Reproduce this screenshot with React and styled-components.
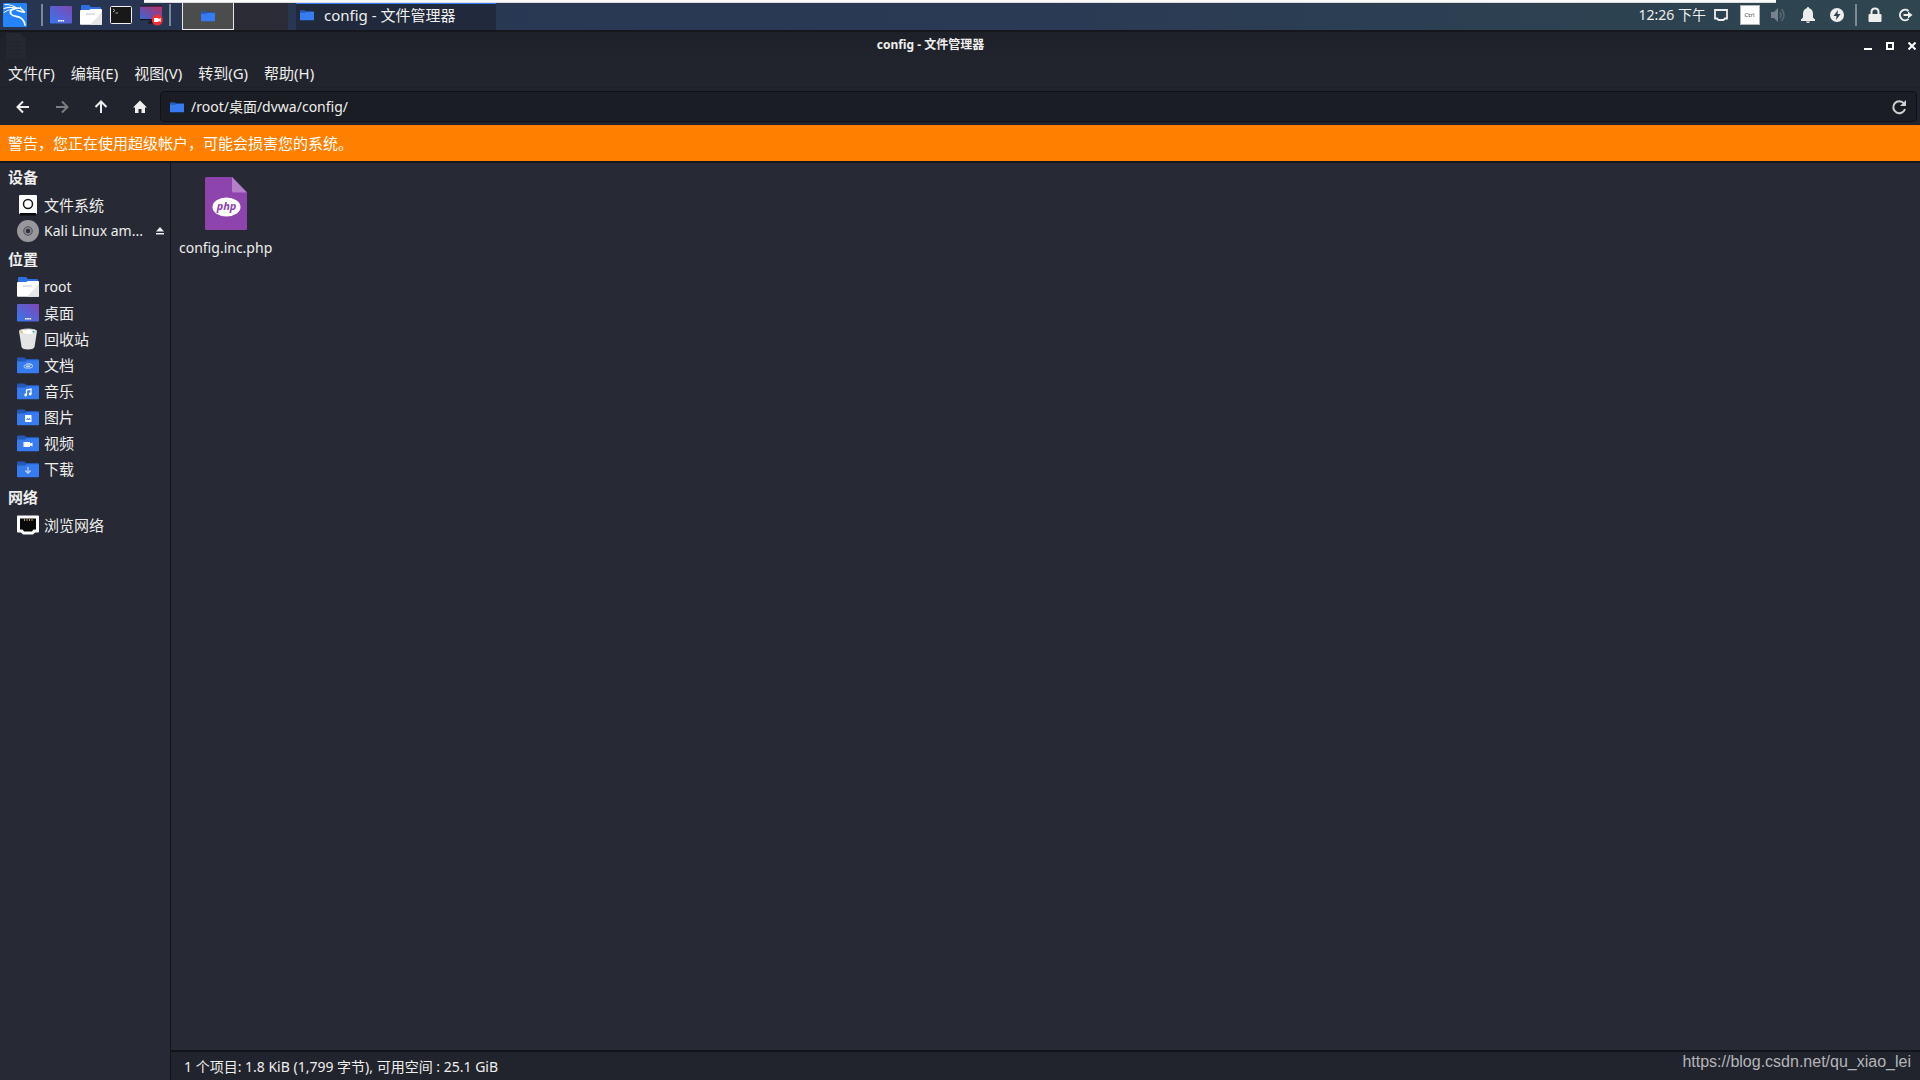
import React from 'react';
import styled, { createGlobalStyle, css } from 'styled-components';

const GlobalStyle = createGlobalStyle`
  * {
    box-sizing: border-box;
  }

  body {
    margin: 0;
    background: #272935;
  }

  button, input {
    font: inherit;
    color: inherit;
  }
`;

// Icons

const Folder = ({ size = 22, children }) => (
  <svg width={size} height={size} viewBox="0 0 22 22" aria-hidden="true">
    <path d="M0 4.500q0-1 1-1h6.500l1.500 1.500h12q1 0 1 1v3H0z" fill="#2459b8" />
    <path d="M0 7.500h8l1.500-1.200H22v12.200q0 .8-.8.800H.8q-.8 0-.8-.8z" fill="#367bf0" />
    {children}
  </svg>
);

const HomeFolder = () => (
  <svg width="22" height="22" viewBox="0 0 22 22" aria-hidden="true">
    <path d="M1 2q0-1 1-1h7l2 2h9q1 0 1 1v4H1z" fill="#2f6fe0" />
    <path d="M0 7q0-1 1-1h8l2-1h10q1 0 1 1v14q0 .8-.8.800H.8Q0 20.800 0 20z" fill="#fff" />
    <path d="M22 8v12q0 .8-.8.800H10z" fill="#e6e6e8" />
    <rect x="6" y="9.500" width="9" height="1" fill="#c4c4c8" />
  </svg>
);

const Desktop = () => (
  <svg width="22" height="22" viewBox="0 0 22 22" aria-hidden="true">
    <defs>
      <linearGradient id="screen" x1="0" y1="1" x2="1" y2="0">
        <stop offset="0" stopColor="#3478f0" />
        <stop offset="1" stopColor="#8147b4" />
      </linearGradient>
    </defs>
    <rect y="2" width="22" height="17.500" rx="1" fill="url(#screen)" />
    <path d="M8 16h1.700v1.500H8zM10.200 16h1.700v1.500h-1.700zM12.400 16h1.700v1.500h-1.700z" fill="#fff" />
  </svg>
);

const Terminal = () => (
  <svg width="22" height="22" viewBox="0 0 22 22" aria-hidden="true">
    <rect x=".5" y="2.500" width="21" height="17" rx="1" fill="#181818" stroke="#f2f2f2" />
    <path d="M3 5l2 1.500L3 8M5.500 9h2.500" fill="none" stroke="#aaa" strokeWidth="1" />
  </svg>
);

const Recorder = () => (
  <svg width="23" height="22" viewBox="0 0 23 22" aria-hidden="true">
    <defs>
      <linearGradient id="record" x1="0" y1="1" x2="1" y2="0">
        <stop offset="0" stopColor="#3468d8" />
        <stop offset="1" stopColor="#c02c62" />
      </linearGradient>
    </defs>
    <rect y="2" width="22" height="13.500" fill="url(#record)" />
    <path d="M0 1.500h22v1H0zM0 15h22v1.300H0zM10 16h3v3h-3zM8 18h6v1.500H8z" fill="#14141c" />
    <circle cx="17.300" cy="16" r="5.600" fill="#ee2f36" />
    <path d="M14 14h4.500v1.200l2.200-1.200v4l-2.200-1.200v1.200H14z" fill="#fff" />
  </svg>
);

const KaliLogo = () => (
  <svg width="24" height="24" viewBox="0 0 24 24" aria-hidden="true">
    <rect width="24" height="24" rx="1" fill="#2583fc" />
    <g fill="none" stroke="#fff" strokeLinecap="round" strokeLinejoin="round">
      <path d="M2 1.500c4.500 0 8.500 1 11.500 3.500" strokeWidth="1.200" />
      <path d="M1 5.500c4-1.500 8-1.500 12 0" strokeWidth="1.100" />
      <path d="M1 9.500c3-2.300 6-3 10-3" strokeWidth="1" />
      <path d="M12.500 5.500c-4.500.5-6.500 3.500-4 6 2 2 5.500 1.500 8.500 3 3 1.500 4.500 4 5 7.500" strokeWidth="1.700" />
      <path d="M12.500 5.500c2.500-1 5-.5 6.500 1l2.500 2.800-3-.6c-1.500-.4-3-1.200-4.500-1.200" strokeWidth="1.500" />
      <path d="M18 5.500l-.5-1.500" strokeWidth="1" />
    </g>
  </svg>
);

const Drive = () => (
  <svg width="22" height="22" viewBox="0 0 22 22" aria-hidden="true">
    <rect x="2" y="1" width="18" height="19" rx="1" fill="#fff" />
    <circle cx="11" cy="10" r="4.500" fill="none" stroke="#181818" strokeWidth="1.500" />
    <rect x="3" y="19" width="16" height="2.500" fill="#0c0c10" />
  </svg>
);

const Disc = () => (
  <svg width="22" height="22" viewBox="0 0 22 22" aria-hidden="true">
    <circle cx="11" cy="11" r="11" fill="#98989c" />
    <circle cx="11" cy="11" r="4.300" fill="#86868c" stroke="#50505a" strokeWidth="1" />
    <circle cx="11" cy="11" r="2.200" fill="#30303a" />
  </svg>
);

const Trash = () => (
  <svg width="22" height="22" viewBox="0 0 22 22" aria-hidden="true">
    <path d="M2 3l2.500 16q1 2.500 6.500 2.500t6.500-2.500L20 3z" fill="#e4e4e4" />
    <ellipse cx="11" cy="3" rx="9" ry="2.500" fill="#d0d0d0" />
    <path d="M4 4l2-2 3 .5L12 1l3 1.500 3-.3v2Q11 8 4 4z" fill="#fff" />
    <path d="M4 3.500h2V5H4z" fill="#e8c53c" />
    <path d="M15.500 3h2v1.500h-2z" fill="#45a6b8" />
  </svg>
);

const Ethernet = () => (
  <svg width="22" height="22" viewBox="0 0 22 22" aria-hidden="true">
    <path d="M1 1.500h20q1 0 1 1v15q0 1-1 1h-3L16 20.500H6L4 18.500H1q-1 0-1-1v-15q0-1 1-1z" fill="#fff" />
    <path d="M3 4.500h16v11h-2.500l-1.500 2H7l-1.500-2H3z" fill="#080808" />
    <path d="M7.500 5v2M10 5v2M12.500 5v2M15 5v2" stroke="#b89a58" strokeWidth="1" />
  </svg>
);

const PhpFile = () => (
  <svg width="42" height="54" viewBox="0 0 42 54" aria-hidden="true">
    <path d="M1.500 0H27l15 15.500v36q0 1.500-1.500 1.500h-39Q0 53 0 51.500v-50Q0 0 1.500 0z" fill="#8e44ad" />
    <path d="M27 0l15 15.500H28.500q-1.500 0-1.500-1.500z" fill="#b37fca" />
    <ellipse cx="21.500" cy="30" rx="14" ry="9.500" fill="#fff" />
    <text x="21.500" y="33" textAnchor="middle" fontFamily="Open Sans, sans-serif" fontSize="11" fontWeight="bold" fontStyle="italic" fill="#8e44ad">php</text>
  </svg>
);

const Eject = () => (
  <svg width="8" height="8" viewBox="0 0 8 8" aria-hidden="true">
    <path d="M4 0l4 4.500H0zM0 6h8v1.500H0z" fill="#eee" />
  </svg>
);

const Arrow = ({ turn = 0 }) => (
  <svg width="14" height="14" viewBox="0 0 14 14" aria-hidden="true">
    <path d="M13 7H2M7 1.500L1.500 7 7 12.500" transform={`rotate(${turn} 7 7)`} fill="none" stroke="currentColor" strokeWidth="2" />
  </svg>
);

const Home = () => (
  <svg width="14" height="14" viewBox="0 0 14 14" aria-hidden="true">
    <path d="M7 .5l7 7h-2V13H8.500V9h-3v4H2V7.500H0z" fill="currentColor" />
  </svg>
);

const Reload = () => (
  <svg width="16" height="16" viewBox="0 0 16 16" aria-hidden="true">
    <path d="M13 4.500A6 6 0 1 0 14 10" fill="none" stroke="currentColor" strokeWidth="2" />
    <path d="M15 1v6H9z" fill="currentColor" />
  </svg>
);

const Screen = () => (
  <svg width="14" height="14" viewBox="0 0 14 14" aria-hidden="true">
    <path d="M1 2h12v8.500h-2L9.500 12h-5L3 10.500H1z" fill="none" stroke="#eee" strokeWidth="1.800" />
  </svg>
);

const Speaker = () => (
  <svg width="16" height="16" viewBox="0 0 16 16" aria-hidden="true">
    <path d="M0 5h3l4-4v14l-4-4H0z" fill="#75828b" />
    <path d="M9 5q2 3 0 6M10.500 2q5 6 0 12" fill="none" stroke="#5a6a74" strokeWidth="1.500" />
  </svg>
);

const Bell = () => (
  <svg width="14" height="16" viewBox="0 0 14 16" aria-hidden="true">
    <path d="M7 0q1 0 1.200 1.200Q12 2.200 12 7v3.500l2 2V14H0v-1.500l2-2V7q0-4.800 3.800-5.800Q6 0 7 0zM5 14.500h4Q8.500 16 7 16t-2-1.500z" fill="#eee" />
  </svg>
);

const Power = () => (
  <svg width="14" height="14" viewBox="0 0 14 14" aria-hidden="true">
    <circle cx="7" cy="7" r="7" fill="#eee" />
    <path d="M8 2L3.500 8h3L6 12l4.500-6h-3z" fill="#2e404c" />
  </svg>
);

const Lock = () => (
  <svg width="14" height="16" viewBox="0 0 14 16" aria-hidden="true">
    <rect x=".5" y="7" width="13" height="8" rx="1" fill="#eee" />
    <path d="M3.500 7.500V5q0-3.500 3.500-3.500T10.500 5v2.500" fill="none" stroke="#eee" strokeWidth="2" />
  </svg>
);

const Logout = () => (
  <svg width="15" height="14" viewBox="0 0 15 14" aria-hidden="true">
    <path d="M10.500 3A5.200 5.200 0 1 0 10.500 11" fill="none" stroke="#eee" strokeWidth="2" />
    <path d="M5.500 6H10V3.500L14.500 7 10 10.500V8H5.500z" fill="#eee" />
  </svg>
);

const Minimize = () => (
  <svg width="8" height="8" viewBox="0 0 8 8" aria-hidden="true">
    <rect y="6" width="8" height="2" fill="#fff" />
  </svg>
);

const Maximize = () => (
  <svg width="8" height="8" viewBox="0 0 8 8" aria-hidden="true">
    <rect x="1" y="1" width="6" height="6" fill="none" stroke="#fff" strokeWidth="2" />
  </svg>
);

const Close = () => (
  <svg width="8" height="8" viewBox="0 0 8 8" aria-hidden="true">
    <path d="M.5.5l7 7M7.500.5l-7 7" stroke="#fff" strokeWidth="2" />
  </svg>
);

const GhostFile = () => (
  <svg width="22" height="27" viewBox="0 0 22 27" aria-hidden="true">
    <path d="M1 1h14l6 6v20H1z" fill="#262830" />
    <path d="M4 10h13M4 14h13M4 18h13M4 22h13" stroke="#23252c" />
  </svg>
);

const devices = [
  { name: '文件系统', icon: <Drive /> },
  { name: 'Kali Linux am...', icon: <Disc />, latin: true, eject: true },
];

const places = [
  { name: 'root', icon: <HomeFolder />, latin: true },
  { name: '桌面', icon: <Desktop /> },
  { name: '回收站', icon: <Trash /> },
  {
    name: '文档',
    icon: (
      <Folder>
        <path d="M14 11H9q-2 0-2 1.500T9 14h4q2.500 0 2.500-2T13 9.800H9.500M9 12.500h4" fill="none" stroke="#c4d8fb" strokeWidth="1" />
      </Folder>
    ),
  },
  {
    name: '音乐',
    icon: (
      <Folder>
        <path d="M9.500 15V10l4.500-1v5" fill="none" stroke="#fff" strokeWidth="1.300" />
        <circle cx="8.700" cy="15" r="1.400" fill="#fff" />
        <circle cx="13.200" cy="14" r="1.400" fill="#fff" />
      </Folder>
    ),
  },
  {
    name: '图片',
    icon: (
      <Folder>
        <rect x="8" y="9" width="6.500" height="7" fill="#fff" />
        <path d="M9 14l1.500-2 1 1 1-1.500 1.200 2.500z" fill="#5a8fee" />
      </Folder>
    ),
  },
  {
    name: '视频',
    icon: (
      <Folder>
        <path d="M6.500 10h6.500v1.500l2.500-1v4l-2.500-1V15H6.500z" fill="#fff" />
      </Folder>
    ),
  },
  {
    name: '下载',
    icon: (
      <Folder>
        <path d="M11 9v6M8.300 12.500L11 15.200l2.700-2.700" fill="none" stroke="#c4d8fb" strokeWidth="1.200" />
      </Folder>
    ),
  },
];

const network = [{ name: '浏览网络', icon: <Ethernet /> }];

const menus = ['文件(F)', '编辑(E)', '视图(V)', '转到(G)', '帮助(H)'];

const Section = ({ title, items }) => (
  <section>
    <GroupTitle>{title}</GroupTitle>
    <PlaceList>
      {items.map((item) => (
        <PlaceRow key={item.name}>
          <PlaceButton $latin={item.latin}>
            {item.icon}
            {item.name}
          </PlaceButton>
          {item.eject && (
            <EjectButton aria-label="弹出">
              <Eject />
            </EjectButton>
          )}
        </PlaceRow>
      ))}
    </PlaceList>
  </section>
);

const App = () => (
  <Screenful>
    <GlobalStyle />
    <Panel>
      <Launchers>
        <PanelButton aria-label="Kali" $wide>
          <KaliLogo />
        </PanelButton>
        <Divider />
        <Apps>
          <PanelButton aria-label="桌面"><Desktop /></PanelButton>
          <PanelButton aria-label="文件"><HomeFolder /></PanelButton>
          <PanelButton aria-label="终端"><Terminal /></PanelButton>
          <PanelButton aria-label="录屏"><Recorder /></PanelButton>
        </Apps>
        <Divider />
      </Launchers>
      <Workspaces>
        <Workspace aria-label="工作区 1" $active>
          <Folder size={14} />
        </Workspace>
        <Workspace aria-label="工作区 2" />
      </Workspaces>
      <Task>
        <Folder size={14} />
        config - 文件管理器
      </Task>
      <Tray>
        <Clock>12:26 下午</Clock>
        <TrayIcon><Screen /></TrayIcon>
        <TrayIcon><KeyBadge>Ctrl</KeyBadge></TrayIcon>
        <TrayIcon><Speaker /></TrayIcon>
        <TrayIcon><Bell /></TrayIcon>
        <TrayIcon><Power /></TrayIcon>
        <TrayEnd>
          <Divider />
          <PanelButton aria-label="锁定"><Lock /></PanelButton>
          <PanelButton aria-label="注销"><Logout /></PanelButton>
        </TrayEnd>
      </Tray>
      <TopStrip />
    </Panel>

    <TitleBar>
      <GhostFile />
      <Title>config - 文件管理器</Title>
      <WindowButtons>
        <WindowButton aria-label="最小化"><Minimize /></WindowButton>
        <WindowButton aria-label="最大化"><Maximize /></WindowButton>
        <WindowButton aria-label="关闭"><Close /></WindowButton>
      </WindowButtons>
    </TitleBar>

    <MenuBar>
      {menus.map((menu) => (
        <MenuButton key={menu}>{menu}</MenuButton>
      ))}
    </MenuBar>

    <Toolbar>
      <ToolButton aria-label="后退"><Arrow /></ToolButton>
      <ToolButton aria-label="前进" disabled><Arrow turn={180} /></ToolButton>
      <ToolButton aria-label="向上"><Arrow turn={90} /></ToolButton>
      <ToolButton aria-label="主目录"><Home /></ToolButton>
      <PathBox>
        <Folder size={14} />
        <PathInput aria-label="位置" defaultValue="/root/桌面/dvwa/config/" />
        <ReloadButton aria-label="刷新"><Reload /></ReloadButton>
      </PathBox>
    </Toolbar>

    <Warning>警告，您正在使用超级帐户，可能会损害您的系统。</Warning>

    <Body>
      <Sidebar>
        <Section title="设备" items={devices} />
        <Section title="位置" items={places} />
        <Section title="网络" items={network} />
      </Sidebar>
      <Main>
        <Files>
          <FileItem>
            <PhpFile />
            config.inc.php
          </FileItem>
        </Files>
        <StatusBar>
          <span>1 个项目: 1.8 KiB (1,799 字节), 可用空间 : 25.1 GiB</span>
          <Watermark href="https://blog.csdn.net/qu_xiao_lei">https://blog.csdn.net/qu_xiao_lei</Watermark>
        </StatusBar>
      </Main>
    </Body>
  </Screenful>
);

// Styled components
const Screenful = styled.div`
  display: flex;
  flex-direction: column;
  min-height: 100vh;
  background: #272935;
  color: #eeeeec;
  font-family: 'Noto Sans', 'Noto Sans CJK SC', sans-serif;
  font-size: 14px;
  line-height: 20px;

  svg {
    display: block;
    flex: none;
  }
`;

const plainButton = css`
  display: flex;
  align-items: center;
  justify-content: center;
  padding: 0;
  border: none;
  background: none;
`;

const Panel = styled.header`
  position: relative;
  display: flex;
  align-items: center;
  height: 32px;
  padding-left: 3px;
  border-bottom: 2px solid #15171c;
  background: linear-gradient(to right, #273552, #2a3a54 55%, #2f4650);
`;

const TopStrip = styled.div`
  position: absolute;
  top: 0;
  left: 144px;
  right: 144px;
  height: 3px;
  border-bottom: 1px solid #dcdcdc;
  background: #fafafa;
`;

const Launchers = styled.div`
  display: flex;
  align-items: center;
`;

const PanelButton = styled.button`
  ${plainButton}
  width: ${(props) => (props.$wide ? '38px' : '30px')};
  justify-content: ${(props) => (props.$wide ? 'flex-start' : 'center')};
`;

const Divider = styled.span`
  width: 2px;
  height: 22px;
  background: #7f8897;
`;

const Apps = styled.div`
  display: flex;
  padding: 0 3px;
`;

const Workspaces = styled.div`
  display: flex;
  align-self: stretch;
  margin-left: 11px;
  padding-top: 2px;
`;

const Workspace = styled.button`
  ${plainButton}
  width: ${(props) => (props.$active ? '52px' : '54px')};
  border: ${(props) => (props.$active ? '1px solid #e8e8e8' : 'none')};
  background: ${(props) => (props.$active ? '#4c4c4c' : '#2b2c36')};
`;

const Task = styled.button`
  ${plainButton}
  align-self: stretch;
  justify-content: flex-start;
  gap: 10px;
  width: 200px;
  margin: 3px 0 0 8px;
  padding: 0 4px 4px;
  border-top: 1px solid #367bf0;
  background: #202a3c;
  font-size: 15px;
`;

const Tray = styled.div`
  display: flex;
  align-items: center;
  margin-left: auto;
`;

const Clock = styled.time`
`;

const TrayIcon = styled.span`
  display: flex;
  justify-content: center;
  width: 29px;
`;

const KeyBadge = styled.span`
  width: 20px;
  height: 20px;
  border: 1px solid #b4b4b4;
  background: #ffffff;
  color: #444444;
  font-size: 6px;
  line-height: 18px;
  text-align: center;
`;

const TrayEnd = styled.div`
  display: flex;
  align-items: center;
  padding-left: 4px;

  ${Divider} {
    margin-right: 3px;
  }
`;

const TitleBar = styled.div`
  display: grid;
  grid-template-columns: 1fr auto 1fr;
  align-items: center;
  height: 27px;
  padding: 0 4px 0 5px;
  background: linear-gradient(#1e2028, #22242d);
`;

const Title = styled.h1`
  margin: 0;
  padding: 0 60px 2px 0;
  font-size: 12px;
  line-height: 16px;
  font-weight: bold;
`;

const WindowButtons = styled.div`
  display: flex;
  justify-content: flex-end;
  gap: 14px;
`;

const WindowButton = styled.button`
  ${plainButton}
`;

const MenuBar = styled.nav`
  display: flex;
  height: 28px;
  background: #22242d;
`;

const MenuButton = styled.button`
  ${plainButton}
  padding: 0 8px;
  font-size: 15px;
`;

const Toolbar = styled.div`
  display: flex;
  align-items: center;
  height: 38px;
  padding: 0 3px;
  border-top: 1px solid #1f2129;
  background: #22242d;
`;

const ToolButton = styled.button`
  ${plainButton}
  width: 39px;
  height: 30px;

  &:disabled {
    color: #7d7e82;
  }
`;

const PathBox = styled.div`
  display: flex;
  flex: 1;
  align-items: center;
  gap: 7px;
  height: 31px;
  margin-left: 1px;
  padding: 0 9px;
  border: 1px solid #101116;
  border-radius: 4px;
  background: #1b1d24;
`;

const PathInput = styled.input`
  flex: 1;
  padding: 0;
  border: none;
  outline: none;
  background: none;
`;

const ReloadButton = styled.button`
  ${plainButton}
  color: #d0d0d0;
`;

const Warning = styled.p`
  margin: 0;
  padding: 8px;
  border-bottom: 2px solid #15171c;
  background: #ff8000;
  color: #ffffff;
  font-size: 15px;
`;

const Body = styled.div`
  display: flex;
  flex: 1;
`;

const Sidebar = styled.aside`
  display: flex;
  flex-direction: column;
  gap: 1px;
  width: 171px;
  border-right: 1px solid #121318;
`;

const GroupTitle = styled.h2`
  margin: 0;
  padding: 0 8px;
  font-size: 15px;
  font-weight: bold;
  line-height: 29px;
`;

const PlaceList = styled.ul`
  margin: 0;
  padding: 0;
  list-style: none;
`;

const PlaceRow = styled.li`
  display: flex;
  align-items: center;
  justify-content: space-between;
  height: 26px;
  padding: 0 6px 0 17px;
`;

const PlaceButton = styled.button`
  ${plainButton}
  gap: 5px;
  font-size: ${(props) => (props.$latin ? '14px' : '15px')};
`;

const EjectButton = styled.button`
  ${plainButton}
`;

const Main = styled.main`
  display: flex;
  flex: 1;
  flex-direction: column;
`;

const Files = styled.div`
  flex: 1;
  padding: 14px 8px;
`;

const FileItem = styled.button`
  ${plainButton}
  flex-direction: column;
  gap: 7px;
`;

const StatusBar = styled.footer`
  display: flex;
  align-items: center;
  justify-content: space-between;
  height: 30px;
  padding: 1px 9px 0 13px;
  border-top: 2px solid #121318;
  background: #22242d;
`;

const Watermark = styled.a`
  padding-bottom: 10px;
  color: #b4b5b9;
  font-family: 'Liberation Sans', sans-serif;
  font-size: 16px;
  text-decoration: none;
`;

export default App;
